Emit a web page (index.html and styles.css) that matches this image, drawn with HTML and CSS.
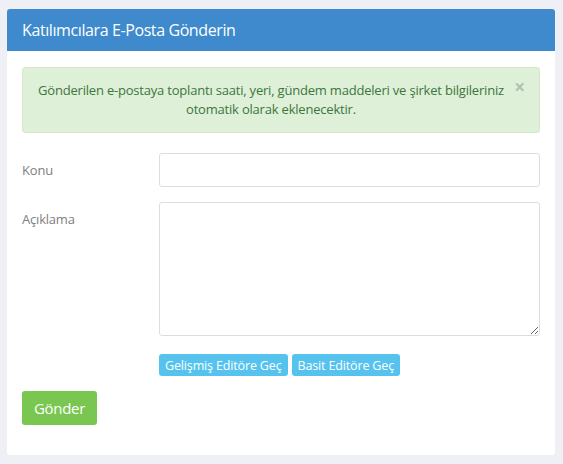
FILE: index.html
```html
<!DOCTYPE html>
<html lang="tr">
<head>
    <meta charset="UTF-8">
    <meta name="viewport" content="width=device-width, initial-scale=1.0">
    <title>Katılımcılara E-Posta Gönderin</title>
    <link rel="stylesheet" href="styles.css">
</head>
<body>
    <div class="panel">
        <div class="panel-heading">Katılımcılara E-Posta Gönderin</div>
        <div class="panel-body">
            <!-- bilgi kutusu -->
            <div class="alert">
                <span class="close">&times;</span>
                Gönderilen e-postaya toplantı saati, yeri, gündem maddeleri ve şirket bilgileriniz otomatik olarak eklenecektir.
            </div>

            <div class="form-row">
                <label for="konu">Konu</label>
                <div class="field"><input type="text" id="konu"></div>
            </div>
            <div class="form-row">
                <label for="aciklama">Açıklama</label>
                <div class="field">
                    <textarea id="aciklama"></textarea>
                    <div class="editor-buttons">
                        <button class="btn-xs">Gelişmiş Editöre Geç</button>
                        <button class="btn-xs">Basit Editöre Geç</button>
                    </div>
                </div>
            </div>

            <button class="btn-send">Gönder</button>
        </div>
    </div>
</body>
</html>
```

FILE: styles.css
```css
body {
    font-family: 'Open Sans', 'Noto Sans', sans-serif;
    font-size: 13px;
    letter-spacing: -0.2px;
    margin: 0;
    padding: 9px 8px 10px 7px;
    background-color: #eff0f5;
    color: #666;
}
.panel {
    background-color: #fff;
    border-radius: 3px;
    overflow: hidden;
}
.panel-heading {
    background-color: #3e8acc;
    color: #fff;
    font-size: 16px;
    letter-spacing: -0.4px;
    height: 42px;
    line-height: 42px;
    padding: 0 15px;
}
.panel-body {
    padding: 16px 15px 30px;
}
.alert {
    position: relative;
    background-color: #dff0d8;
    border: 1px solid #d6e9c6;
    border-radius: 3px;
    color: #3c763d;
    text-align: center;
    line-height: 19px;
    padding: 13px 30px 13px 10px;
    margin-bottom: 20px;
}
.alert .close {
    position: absolute;
    top: 11px;
    right: 14px;
    font-size: 19px;
    font-weight: bold;
    color: #b4bfb0;
    line-height: 17px;
}
.form-row {
    display: flex;
    margin-bottom: 15px;
}
.form-row label {
    width: 137px;
    flex-shrink: 0;
    padding-top: 8px;
    line-height: 19px;
    color: #808080;
}
.field {
    flex: 1;
}
.field input,
.field textarea {
    display: block;
    box-sizing: border-box;
    width: 100%;
    border: 1px solid #ddd;
    border-radius: 3px;
    font-family: inherit;
    font-size: 13px;
    margin: 0;
}
.field input {
    height: 34px;
}
.field textarea {
    height: 134px;
    resize: vertical;
}
.editor-buttons {
    display: flex;
    gap: 4px;
    margin-top: 18px;
}
.btn-xs {
    background-color: #55c3ee;
    color: #fff;
    border: none;
    border-radius: 3px;
    font-family: inherit;
    font-size: 12.5px;
    letter-spacing: -0.15px;
    height: 22px;
    padding: 0 6px;
}
.btn-send {
    background-color: #79c750;
    color: #fff;
    border: none;
    border-radius: 3px;
    font-family: inherit;
    font-size: 15px;
    letter-spacing: -0.3px;
    height: 34px;
    padding: 0 12px;
}
```
